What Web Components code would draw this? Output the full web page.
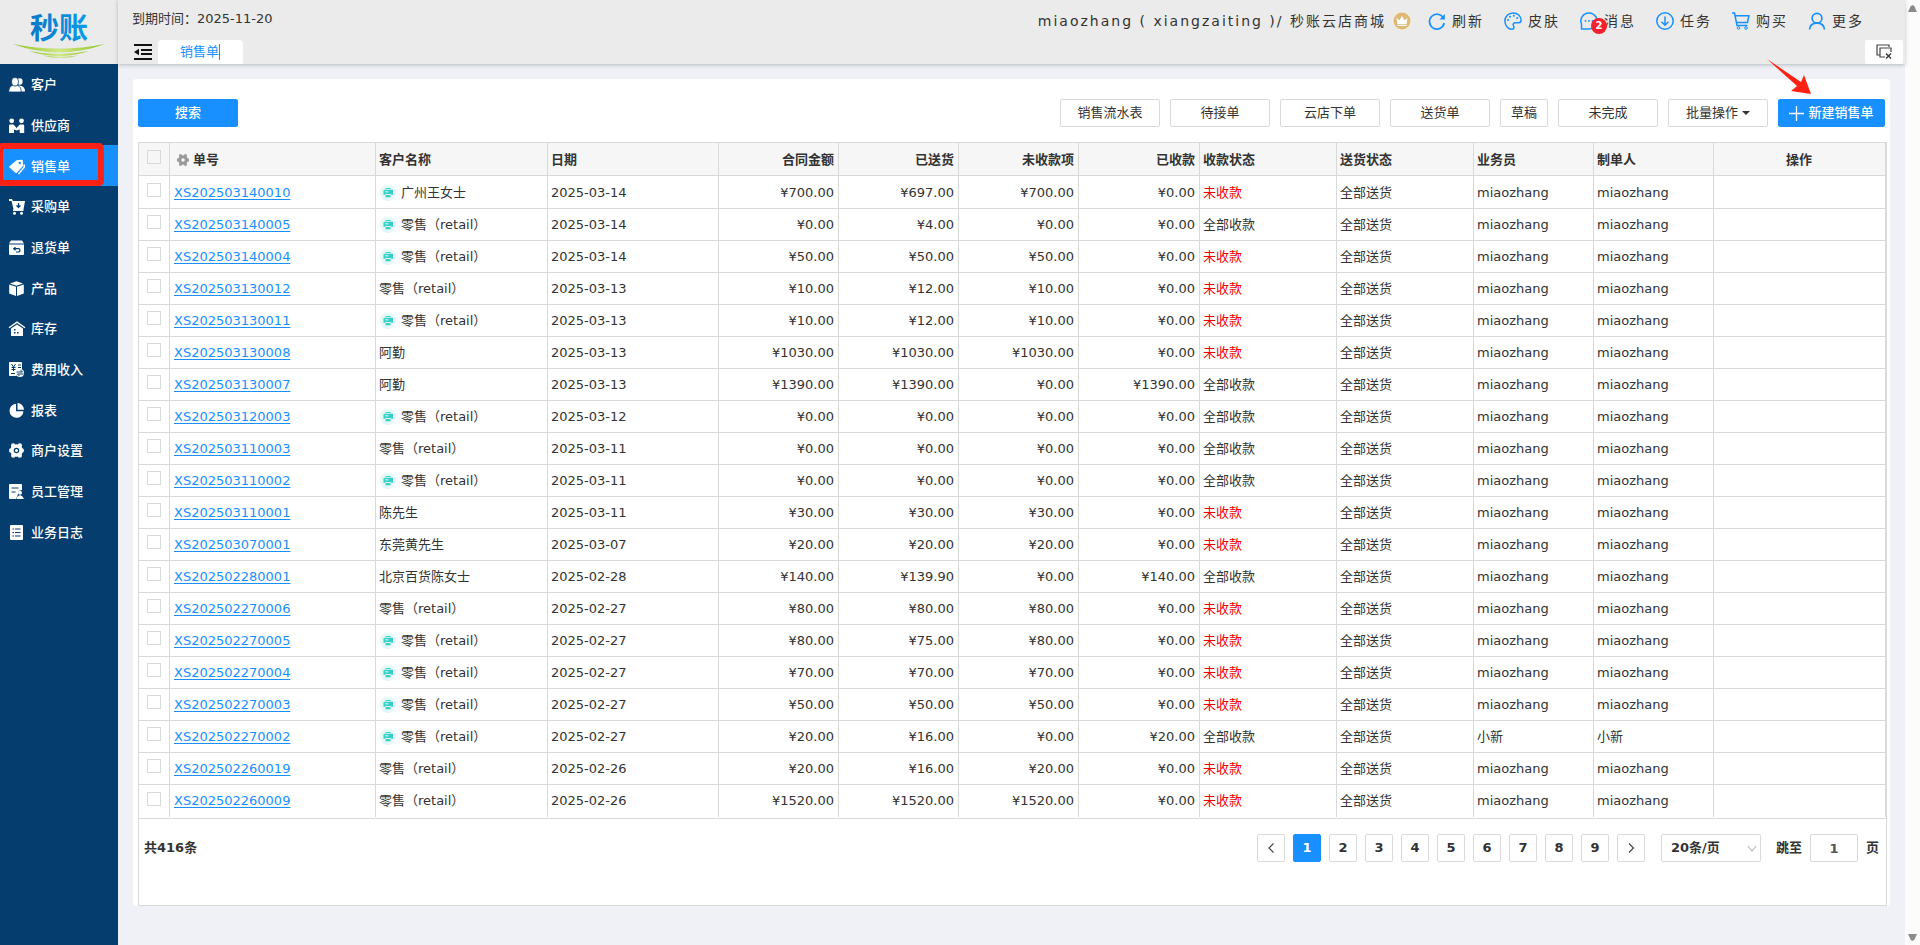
<!DOCTYPE html>
<html lang="zh-CN">
<head>
<meta charset="utf-8">
<title>销售单</title>
<style>
html, body { margin: 0; }
body { min-height: 100vh; font: 13px/20px "DejaVu Sans", "Noto Sans CJK SC", sans-serif; color: #333; background: #eff1f6; }
</style>
</head>
<body>
<sales-app></sales-app>
<script>
const ICONS = {
  customer: `<g fill="#fff"><ellipse cx="10.800" cy="4.500" rx="2.800" ry="3.300"/><path d="M9.500 8.500c4 0 6.500 2 6.500 6h-5z"/><g stroke="#063d6f" stroke-width=".8"><path d="M-.2 15c0-5 2.200-6.800 6.200-6.800s6.200 1.800 6.200 6.800z"/><ellipse cx="6" cy="4.800" rx="3.400" ry="4.200"/></g></g>`,
  supplier: `<g fill="#fff"><circle cx="2.700" cy="2.800" r="2.400"/><circle cx="12.500" cy="2.800" r="2.400"/><path d="M0 7.500q0-1 1-1h3.500L7.600 10l3.200-3.500H14q1.200 0 1.200 1.200V15h-4.500v-3.500L7.600 12.500 5 11.500V15H0z"/></g>`,
  sale: `<path fill="#fff" d="M7.500 1.200 12.800.8q1 0 1.100 1L14 7l-6.200 6.800q-.7.700-1.400 0L.5 8.600q-.7-.7 0-1.400z"/><circle cx="10.800" cy="4" r="1.200" fill="#1890ff"/><path fill="none" stroke="#fff" stroke-width="1.500" d="M15.200 5.500v2.800L9.500 15"/>`,
  purchase: `<path fill="#fff" d="M0 0h3l1 2h12l-1.500 8.500H4.600L2.500 2H0zM4 10.500h10.500V12H4z"/><circle cx="5.500" cy="14.300" r="1.500" fill="#fff"/><circle cx="12.500" cy="14.300" r="1.500" fill="#fff"/><path stroke="#063d6f" stroke-width="1.300" fill="none" d="M9.500 4v4.500M7.500 6.500l2 1.800 2-1.800"/>`,
  refund: `<path fill="#fff" d="M2 .5h11l2 3H0zM0 4.500h15V14q0 1-1 1H1q-1 0-1-1z"/><path fill="none" stroke="#063d6f" stroke-width="1.200" d="M6.500 7.200 4.700 8.700l1.800 1.500M4.800 8.700h4.700q1.500 0 1.500 1.600T9.500 12H7"/>`,
  product: `<path fill="#fff" d="M7.500.3 14 2.600 7.500 4.800 1 2.600zM.2 3.500 7 5.800V15L.2 12.600zM14.800 3.500 8 5.800V15l6.800-2.400z"/>`,
  stock: `<path fill="none" stroke="#fff" stroke-width="1.400" d="M0 6.800 8 1.200l8 5.600"/><path fill="#fff" d="M8 3.500 14 7.600V15H2V7.600z"/><path fill="#063d6f" d="M5 8h1.500v1.500H5zM5 11h1.500v1.500H5zM8 11h1.500v1.500H8z"/>`,
  fee: `<path fill="#fff" d="M1 0h11q1 0 1 1v6q-5 0-5.500 7H1q-1 0-1-1V1q0-1 1-1z"/><path stroke="#063d6f" fill="none" d="M2.500 2 4.500 5l2-3M2.500 5.500h4M4.500 5v4M2.500 7.500h4M9 3h3M9 5.500h3M2 11.500h4"/><circle cx="11" cy="11" r="4" fill="#fff"/><path stroke="#063d6f" fill="none" d="M7.500 10h6l-2-2M14.500 12h-6l2 2"/>`,
  report: `<path fill="#fff" d="M7 .8a7 7 0 1 0 7.500 7.400H7z"/><path fill="#fff" d="M8.500 0a7 7 0 0 1 6.500 6.700H8.500z"/>`,
  shop: `<g fill="#fff"><circle cx="7.500" cy="7.500" r="6.300"/><circle cx="4.200" cy="2.400" r="2.200"/><circle cx="10.800" cy="2.400" r="2.200"/><circle cx="4.200" cy="12.600" r="2.200"/><circle cx="10.800" cy="12.600" r="2.200"/><circle cx="2.200" cy="7.500" r="2.200"/><circle cx="12.800" cy="7.500" r="2.200"/></g><circle cx="7.500" cy="7.500" r="2.200" fill="none" stroke="#063d6f" stroke-width="1.200"/>`,
  staff: `<path fill="#fff" d="M1 0h11q1 0 1 1v5q-4 0-4 3.500 0 2-2 5.500H1q-1 0-1-1V1q0-1 1-1z"/><path stroke="#063d6f" d="M2.500 4h7M2.500 8h4"/><circle cx="11" cy="8.800" r="2" fill="#fff"/><path fill="#fff" d="M7.500 15q.5-3 3.500-4 3 1 4 4z"/>`,
  log: `<path fill="#fff" d="M2 0h11q1 0 1 1v13q0 1-1 1H2q-1 0-1-1V1q0-1 1-1z"/><path stroke="#063d6f" stroke-width="1.200" d="M3.500 4h1.500M6 4h5.500M3.500 7.500h1.500M6 7.500h5.500M3.500 11h1.500M6 11h5.500"/>`,
  refresh: `<path fill="none" stroke="#1890ff" stroke-width="1.700" d="M15.300 5.800A7.400 7.400 0 1 0 16.200 11"/><path fill="#1890ff" d="M16.800 2v5.500h-5.300z"/>`,
  palette: `<path fill="none" stroke="#1890ff" stroke-width="1.500" d="M9 .9C4.500.9.900 4.500.9 9c0 4.800 3.500 8.200 7 8.200 3 0 2.200-2.200 1.500-3.500-.8-1.600.2-3 2-3h3.200c1.700 0 2.500-.9 2.500-2.500C17.100 4 13.500.9 9 .9z"/><g fill="#1890ff"><circle cx="4" cy="8" r="1"/><circle cx="6" cy="4.800" r="1"/><circle cx="9.800" cy="3.800" r="1"/><circle cx="13.200" cy="6" r="1"/></g>`,
  message: `<path fill="none" stroke="#1890ff" stroke-width="1.500" stroke-linejoin="round" d="M1.500 17v-4.700A8.200 8 0 1 1 9 17z"/><g fill="#1890ff"><circle cx="5.500" cy="9" r=".9"/><circle cx="9" cy="9" r=".9"/><circle cx="12.500" cy="9" r=".9"/></g>`,
  task: `<circle cx="9" cy="9" r="8.200" fill="none" stroke="#1890ff" stroke-width="1.500"/><path fill="none" stroke="#1890ff" stroke-width="1.500" d="M9 4.500v8.500M5.500 9.700 9 13.200l3.500-3.500"/>`,
  cart: `<path fill="none" stroke="#1890ff" stroke-width="1.500" d="M0 1h2.500L5 13.500h10.500M3.300 3.800h13.600L15.500 10.500H4.600"/><circle cx="6.500" cy="16" r="1.300" fill="none" stroke="#1890ff"/><circle cx="14" cy="16" r="1.300" fill="none" stroke="#1890ff"/>`,
  user: `<circle cx="9" cy="6.200" r="4.900" fill="none" stroke="#1890ff" stroke-width="1.700"/><path fill="none" stroke="#1890ff" stroke-width="1.700" d="M1.500 17.500c.3-4 3-6.400 7.500-6.400s7.200 2.400 7.500 6.400"/>`,
  crown: `<circle cx="10" cy="10" r="9.500" fill="#f7efdc"/><circle cx="10" cy="10" r="8.500" fill="#dfb977"/><path fill="#fff" d="m4.500 7 3 2.300L10 5l2.500 4.300 3-2.300-1 6.200h-9zM5.500 14h9v1h-9z"/>`,
  fold: `<path stroke="#111" stroke-width="2" d="M0 1h18M7 6h11M7 10h11M0 15h18"/><path fill="#111" d="M5 4.800v6.400L0 8z"/>`,
  closeall: `<path fill="none" stroke="#444" stroke-width="1.200" d="M4 11H1V1h12v2M9 13H4V4h11v4"/><path stroke="#333" stroke-width="1.300" d="m10 9.500 5 5m0-5-5 5"/>`,
  gear: `<g fill="#999"><circle cx="6" cy="6" r="4.800"/><path d="M2.200.2h2.600v3H2.200zM7.200.2h2.600v3H7.200zM2.200 8.800h2.600v3H2.200zM7.200 8.800h2.600v3H7.200zM0 4.600h2v2.800H0zM10 4.600h2v2.800h-2z"/></g><circle cx="6" cy="6" r="1.800" fill="#f6f6f6"/>`,
  print: `<circle cx="8" cy="8" r="8" fill="#e4f8f6"/><path fill="#36cfc9" d="M5.500 3h5v1h-5zM4.500 4.700h7.800q.7 0 .7.700v4.400h-2V9H5.500v.8h-2V5.400q0-.7 1-.7zM5.500 10h5v2.200h-5z"/><path stroke="#e4f8f6" d="M5 6.800h3.500"/>`,
  plus: `<path stroke="#fff" stroke-width="1.300" d="M7.500 0v15M0 7.500h15"/>`,
  left: `<path fill="none" stroke="#444" stroke-width="1.200" d="M7.500 1.500 3 6l4.500 4.500"/>`,
  right: `<path fill="none" stroke="#444" stroke-width="1.200" d="M3 1.500 7.500 6 3 10.500"/>`,
  down: `<path fill="none" stroke="#bbb" stroke-width="1.200" d="m1 2 4 5 4-5"/>`,
  caret: `<path fill="#333" d="M0 0h8L4 4z"/>`,
  scrollup: `<path fill="#8b8b8b" d="M0 7h9L6.500 1.500Q4.500-1 2.500 1.500z"/>`,
  scrolldown: `<path fill="#8b8b8b" d="M0 0h9L6.500 5.500Q4.500 8 2.500 5.500z"/>`
};
const SIZES = { refresh:[18,18], palette:[18,18], message:[18,18], task:[18,18], cart:[18,18], user:[18,18], crown:[20,20], fold:[18,16], closeall:[16,16], gear:[12,12], print:[16,16], plus:[15,15], left:[10,12], right:[10,12], down:[10,9], caret:[8,4], scrollup:[9,7], scrolldown:[9,7] };

function define(name, html, setup) {
  const template = document.createElement("template");
  template.innerHTML = html;
  customElements.define(name, class extends HTMLElement {
    constructor() {
      super();
      this.attachShadow({ mode: "open" }).append(template.content.cloneNode(true));
    }
    connectedCallback() { if (setup) setup(this, this.shadowRoot); }
  });
}

define("m-icon", `<style>:host{display:inline-flex;flex:none}svg{display:block;overflow:visible}</style>`, (el, root) => {
  const name = el.getAttribute("name");
  const [w, h] = SIZES[name] || [16, 16];
  root.innerHTML = `<style>:host{display:inline-flex;flex:none}svg{display:block;overflow:visible}</style><svg width="${w}" height="${h}" viewBox="0 0 ${w} ${h}" aria-hidden="true">${ICONS[name] || ""}</svg>`;
});

define("m-button", `<style>
:host{display:block;min-width:100px}
:host([compact]){min-width:48px}
:host([wide]){min-width:107px}
button{display:flex;align-items:center;justify-content:center;gap:4px;width:100%;height:28px;padding:0;border:1px solid #d9d9d9;border-radius:2px;background:#fff;color:#333;font:inherit;cursor:pointer}
:host([primary]) button{background:#1890ff;border-color:#1890ff;color:#fff;font-weight:500}
</style><button type="button"><slot></slot></button>`);

define("brand-logo", `<style>:host{display:block;width:118px;height:64px}svg{display:block}text{font:700 29px "Noto Sans CJK SC",sans-serif}</style>
<svg width="118" height="64" viewBox="0 0 118 64" role="img" aria-label="秒账">
<defs><linearGradient id="b" x1="0" y1="0" x2="1" y2="0"><stop offset="0" stop-color="#0b78c8"/><stop offset="1" stop-color="#0a9be8"/></linearGradient>
<linearGradient id="g"><stop offset="0" stop-color="#8cc220"/><stop offset=".5" stop-color="#d2e88a"/><stop offset="1" stop-color="#8cc220"/></linearGradient></defs>
<text x="30" y="39" fill="url(#b)">秒账</text>
<path fill="url(#g)" d="M13 44q46 9 92 0-46 17-92 0z"/><path fill="url(#g)" d="M29 51q30 6 60 0-30 10-60 0z"/><path fill="url(#g)" d="M43 55.500q17 2.500 35 0-18 5-35 0z"/></svg>`);

define("side-nav", `<style>
:host{display:block;position:relative;color:#fff}
nav{display:grid;grid-template-rows:repeat(12,1fr);height:488px}
a{display:flex;align-items:center;gap:6px;padding:2px 0 0 9px;color:#fff;text-decoration:none;font-weight:500}
a[aria-current]{background:#1890ff}
.mark{box-sizing:border-box;position:absolute;left:-3px;top:79px;width:107px;height:43px;border:6px solid #ff2114;border-radius:5px;pointer-events:none}
</style><nav aria-label="主菜单"></nav><div class="mark"></div>`, (el, root) => {
  const items = [["customer","客户"],["supplier","供应商"],["sale","销售单"],["purchase","采购单"],["refund","退货单"],["product","产品"],["stock","库存"],["fee","费用收入"],["report","报表"],["shop","商户设置"],["staff","员工管理"],["log","业务日志"]];
  root.querySelector("nav").innerHTML = items.map(([i, t]) => `<a href="#${i}"${i === "sale" ? ' aria-current="page"' : ""}><m-icon name="${i}"></m-icon>${t}</a>`).join("");
});

define("top-action", `<style>
:host{display:block}
a{position:relative;display:flex;align-items:center;gap:6px;color:inherit;text-decoration:none}
.badge{position:absolute;left:11px;top:7px;width:16px;height:16px;border-radius:8px;background:#f5222d;color:#fff;font:bold 10px/16px "DejaVu Sans",sans-serif;letter-spacing:0;text-align:center}
.badge:empty{display:none}
</style><a href="#"><m-icon></m-icon><slot></slot><span class="badge"></span></a>`, (el, root) => {
  const icon = document.createElement("m-icon");
  icon.setAttribute("name", el.getAttribute("icon"));
  root.querySelector("m-icon").replaceWith(icon);
  root.querySelector(".badge").textContent = el.getAttribute("badge") || "";
});

define("top-bar", `<style>
:host{display:flex;flex-direction:column;justify-content:space-between;height:64px;box-sizing:border-box;background:#ebebeb;box-shadow:0 1px 4px rgba(0,21,41,.25);position:relative}
.info{display:flex;justify-content:space-between;padding:9px 41px 0 14px}
.account{display:flex;align-items:center;height:24px;font-size:14px;letter-spacing:2px}
.account m-icon{margin:0 16px 0 6px}
.actions{display:flex;gap:20px}
.tabs{display:flex;align-items:flex-end;height:24px;padding:0 2px 0 16px}
.fold{align-self:center;display:flex;padding:0;border:0;background:none;margin-right:6px}
.tab{box-sizing:border-box;width:85px;height:24px;padding:2px 0 0 22px;border-radius:4px 4px 0 0;background:#fff;color:#1890ff;text-decoration:none}
.tab span{display:inline-block;height:16px;line-height:16px;border-right:1px solid #1890ff;}
.close{display:flex;align-items:center;justify-content:center;width:38px;height:24px;margin-left:auto;border:0;padding:0;border-radius:2px;background:#fff}
</style>
<div class="info"><div class="expire">到期时间：2025-11-20</div>
<div class="account"><span>miaozhang ( xiangzaiting )/ 秒账云店商城</span><m-icon name="crown"></m-icon>
<div class="actions"><top-action icon="refresh">刷新</top-action><top-action icon="palette">皮肤</top-action><top-action icon="message" badge="2">消息</top-action><top-action icon="task">任务</top-action><top-action icon="cart">购买</top-action><top-action icon="user">更多</top-action></div></div></div>
<div class="tabs"><button class="fold" aria-label="收起菜单"><m-icon name="fold"></m-icon></button><a class="tab" href="#sale"><span>销售单</span></a><button class="close" aria-label="关闭标签"><m-icon name="closeall"></m-icon></button></div>`);

define("tool-bar", `<style>
:host{display:flex;justify-content:space-between;position:relative;padding-right:2px}
.group{display:flex;gap:10px}
svg{position:absolute;right:76px;top:-40px;pointer-events:none}
</style><m-button primary>搜索</m-button>
<div class="group"><m-button>销售流水表</m-button><m-button>待接单</m-button><m-button>云店下单</m-button><m-button>送货单</m-button><m-button compact>草稿</m-button><m-button>未完成</m-button><m-button>批量操作<m-icon name="caret"></m-icon></m-button><m-button primary wide><m-icon name="plus"></m-icon>新建销售单</m-button></div>
<svg width="44" height="36" viewBox="0 0 44 36" aria-hidden="true"><path fill="#ff2114" d="M0 0 34 23 37 16 44 35 24 32 30 27z"/></svg>`);

const PAID = "全部收款", UNPAID = "未收款";
const R = "零售（retail）";
const ORDERS = [
["XS202503140010",1,"广州王女士","2025-03-14","700.00","697.00","700.00","0.00",UNPAID],
["XS202503140005",1,R,"2025-03-14","0.00","4.00","0.00","0.00",PAID],
["XS202503140004",1,R,"2025-03-14","50.00","50.00","50.00","0.00",UNPAID],
["XS202503130012",0,R,"2025-03-13","10.00","12.00","10.00","0.00",UNPAID],
["XS202503130011",1,R,"2025-03-13","10.00","12.00","10.00","0.00",UNPAID],
["XS202503130008",0,"阿勤","2025-03-13","1030.00","1030.00","1030.00","0.00",UNPAID],
["XS202503130007",0,"阿勤","2025-03-13","1390.00","1390.00","0.00","1390.00",PAID],
["XS202503120003",1,R,"2025-03-12","0.00","0.00","0.00","0.00",PAID],
["XS202503110003",0,R,"2025-03-11","0.00","0.00","0.00","0.00",PAID],
["XS202503110002",1,R,"2025-03-11","0.00","0.00","0.00","0.00",PAID],
["XS202503110001",0,"陈先生","2025-03-11","30.00","30.00","30.00","0.00",UNPAID],
["XS202503070001",0,"东莞黄先生","2025-03-07","20.00","20.00","20.00","0.00",UNPAID],
["XS202502280001",0,"北京百货陈女士","2025-02-28","140.00","139.90","0.00","140.00",PAID],
["XS202502270006",0,R,"2025-02-27","80.00","80.00","80.00","0.00",UNPAID],
["XS202502270005",1,R,"2025-02-27","80.00","75.00","80.00","0.00",UNPAID],
["XS202502270004",1,R,"2025-02-27","70.00","70.00","70.00","0.00",UNPAID],
["XS202502270003",1,R,"2025-02-27","50.00","50.00","50.00","0.00",UNPAID],
["XS202502270002",1,R,"2025-02-27","20.00","16.00","0.00","20.00",PAID,"小新"],
["XS202502260019",0,R,"2025-02-26","20.00","16.00","20.00","0.00",UNPAID],
["XS202502260009",0,R,"2025-02-26","1520.00","1520.00","1520.00","0.00",UNPAID]
];

define("order-table", `<style>
:host{display:block}
table{width:100%;table-layout:fixed;border-collapse:separate;border-spacing:0}
th,td{box-sizing:border-box;height:32px;padding:0 4px 0 3px;border:0 solid #d9d9d9;border-width:0 1px 1px 0;text-align:left;white-space:nowrap}
th{height:34px;padding-top:1px;border-top-width:1px;background:#f6f6f6;font-weight:bold}
tbody tr:first-child td{height:33px;padding-top:1px}
tbody tr:last-child td{border-bottom:0}
.num{text-align:right}
.mid{text-align:center}
th.box,td.box{text-align:center;padding:0 0 5px}
.no{padding-left:4px}
input{appearance:none;display:block;width:14px;height:14px;margin:0 auto;border:1px solid #d9d9d9;background:#fff}
th input{background:#f6f6f6}
.line{display:flex;align-items:center;gap:5px;padding-left:1px}
.head{padding-left:4px;gap:4px}
a{color:#1890ff;text-underline-offset:2px}
.red{color:#f00000}
</style>
<table><colgroup></colgroup><thead><tr>
<th class="box" scope="col"><input type="checkbox" aria-label="全选"></th><th scope="col"><span class="line head"><m-icon name="gear"></m-icon>单号</span></th><th scope="col">客户名称</th><th scope="col">日期</th><th class="num" scope="col">合同金额</th><th class="num" scope="col">已送货</th><th class="num" scope="col">未收款项</th><th class="num" scope="col">已收款</th><th scope="col">收款状态</th><th scope="col">送货状态</th><th scope="col">业务员</th><th scope="col">制单人</th><th class="mid" scope="col">操作</th>
</tr></thead><tbody></tbody></table>`, (el, root) => {
  root.querySelector("colgroup").innerHTML = [31,206,172,171,120,120,120,121,137,137,120,120,172].map(w => `<col style="width:${w}px">`).join("");
  root.querySelector("tbody").innerHTML = ORDERS.map(([no, print, name, date, a, b, c, d, state, who = "miaozhang"]) => `<tr>
<td class="box"><input type="checkbox" aria-label="选择 ${no}"></td><td class="no"><a href="#${no}">${no}</a></td>
<td>${print ? `<span class="line"><m-icon name="print"></m-icon>${name}</span>` : name}</td><td>${date}</td>
${[a, b, c, d].map(v => `<td class="num">¥${v}</td>`).join("")}
<td class="${state === UNPAID ? "red" : ""}">${state}</td><td>全部送货</td><td>${who}</td><td>${who}</td><td></td></tr>`).join("");
});

define("page-bar", `<style>
:host{display:flex;align-items:center;justify-content:space-between;box-sizing:border-box;height:88px;padding:15px 7px 43px 5px;border:solid #d9d9d9;border-width:1px 0;font-weight:bold;margin-top:1px}
.pager{display:flex;align-items:center;gap:8px}
button,select,input{box-sizing:border-box;height:28px;border:1px solid #d9d9d9;border-radius:2px;background:#fff;color:#333;font:inherit;padding:0}
button{display:flex;align-items:center;justify-content:center;width:28px}
button[aria-current]{background:#1890ff;border-color:#1890ff;color:#fff}
.size{position:relative;margin:0 7px 0 8px}
select{appearance:none;display:block;width:100px;padding:0 9px}
.size m-icon{position:absolute;right:4px;top:10px;pointer-events:none}
input{width:48px;text-align:center;color:#555}
</style><span>共416条</span>
<div class="pager"><button aria-label="上一页"><m-icon name="left"></m-icon></button><button aria-current="page">1</button><button>2</button><button>3</button><button>4</button><button>5</button><button>6</button><button>7</button><button>8</button><button>9</button><button aria-label="下一页"><m-icon name="right"></m-icon></button>
<span class="size"><select aria-label="每页条数"><option>20条/页</option></select><m-icon name="down"></m-icon></span>
<label for="page">跳至</label><input id="page" type="text" value="1"><span>页</span></div>`);

define("scroll-strip", `<style>:host{display:flex;flex-direction:column;align-items:center;justify-content:space-between;box-sizing:border-box;width:15px;padding:5px 0 4px;background:#fcfcfc}</style><m-icon name="scrollup"></m-icon><m-icon name="scrolldown"></m-icon>`);

define("sales-app", `<style>
:host{display:grid;grid-template-columns:118px minmax(0,1fr) 15px;min-height:100vh}
aside{background:#063d6f}
brand-logo{background:#ebebeb}
main{margin:15px 15px 39px;padding:20px 3px 0 5px;border-radius:4px;background:#fff}
.grid{margin-top:15px;border:solid #d9d9d9;border-width:0 1px}
</style>
<aside><brand-logo></brand-logo><side-nav></side-nav></aside>
<section><top-bar></top-bar><main><tool-bar></tool-bar><div class="grid"><order-table></order-table><page-bar></page-bar></div></main></section>
<scroll-strip></scroll-strip>`);
</script>
</body>
</html>
